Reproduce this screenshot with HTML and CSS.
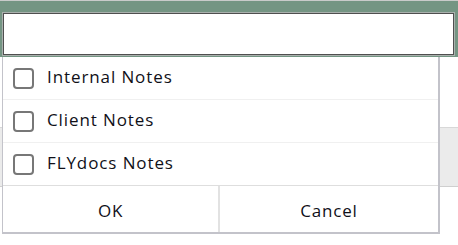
FILE: index.html
```html
<!DOCTYPE html>
<html>
<head>
<meta charset="utf-8">
<link rel="stylesheet" href="styles.css">
</head>
<body>
<div class="page">
  <div class="band">
    <input class="search" type="text">
  </div>
  <div class="bg">
    <div class="bg-row bg-white"></div>
    <div class="bg-row bg-grey"></div>
    <div class="bg-row bg-rest"></div>
  </div>
  <div class="dropdown">
    <div class="options">
      <label class="option"><span class="box"></span><span class="label">Internal Notes</span></label>
      <label class="option"><span class="box"></span><span class="label">Client Notes</span></label>
      <label class="option"><span class="box"></span><span class="label">FLYdocs Notes</span></label>
    </div>
    <div class="buttons">
      <button class="btn btn-ok">OK</button>
      <button class="btn btn-cancel">Cancel</button>
    </div>
  </div>
</div>
</body>
</html>
```

FILE: styles.css
```css
html, body {
  margin: 0;
  padding: 0;
  background: #ffffff;
  font-family: "Open Sans", "Noto Sans", sans-serif;
}
.page {
  position: relative;
  width: 458px;
  height: 245px;
  overflow: hidden;
}
.band {
  height: 57px;
  background: #749583;
  border-top: 1px solid #c9cbca;
  box-sizing: border-box;
  padding: 12px 4px 0 3px;
}
.search {
  display: block;
  box-sizing: border-box;
  width: 451px;
  height: 42px;
  margin: 0;
  border: 1px solid #4f4f4f;
  box-shadow: 0 0 0 1px #aab0ad;
  background: #ffffff;
  outline: none;
  padding: 0;
}
.bg {
  display: flex;
  flex-direction: column;
}
.bg-white {
  height: 70px;
  border-bottom: 1px solid #d8d8d8;
}
.bg-grey {
  height: 58px;
  background: #ebebeb;
  border-bottom: 1px solid #cfcfcf;
}
.bg-rest {
  height: 60px;
}
.dropdown {
  position: absolute;
  left: 2px;
  top: 57px;
  width: 438px;
  box-sizing: border-box;
  background: #ffffff;
  border: 1px solid #c3c3ca;
  border-right-width: 2px;
  border-bottom-width: 2px;
  border-top: none;
  display: flex;
  flex-direction: column;
}
.options {
  display: flex;
  flex-direction: column;
}
.option {
  display: flex;
  align-items: center;
  gap: 13px;
  height: 42px;
  padding-left: 10px;
  border-bottom: 1px solid #f0f0f0;
  color: #101018;
  font-size: 17px;
  letter-spacing: 0.9px;
}
.option:last-child {
  border-bottom: 1px solid #dedede;
}
.label {
  margin-bottom: 3px;
}
.box {
  width: 17px;
  height: 17px;
  border: 2px solid #777777;
  border-radius: 4px;
  background: #ffffff;
  flex: none;
}
.buttons {
  display: flex;
  height: 46px;
}
.btn {
  margin: 0;
  border: none;
  background: #ffffff;
  font-family: "Open Sans", "Noto Sans", sans-serif;
  font-size: 17px;
  letter-spacing: 0.8px;
  color: #101018;
  padding: 3px 0 0 0;
}
.btn-ok {
  flex: 0 0 215px;
}
.btn-cancel {
  flex: 1;
  border-left: 2px solid #e2e2e2;
}
```
